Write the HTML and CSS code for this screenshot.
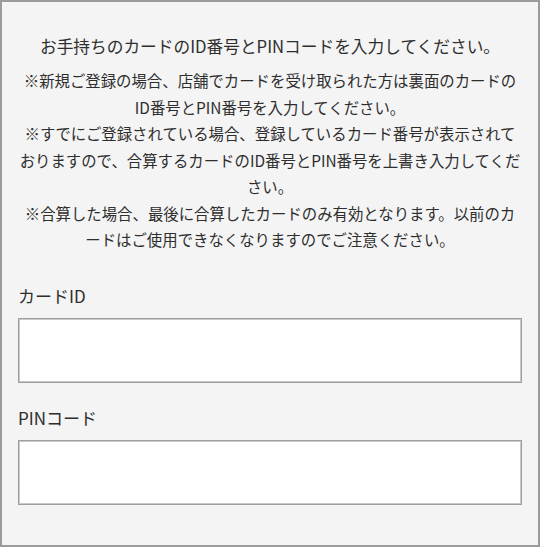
FILE: index.html
```html
<!DOCTYPE html>
<html lang="ja">
<head>
<meta charset="utf-8">
<title>カード登録</title>
<link rel="stylesheet" href="styles.css">
</head>
<body>
<div class="panel">
  <p class="lead">お手持ちのカードのID番号とPINコードを入力してください。</p>
  <p class="notes">※新規ご登録の場合、店舗でカードを受け取られた方は裏面のカードの<br>ID番号とPIN番号を入力してください。<br>※すでにご登録されている場合、登録しているカード番号が表示されて<br>おりますので、合算するカードのID番号とPIN番号を上書き入力してくだ<br>さい。<br>※合算した場合、最後に合算したカードのみ有効となります。以前のカ<br>ードはご使用できなくなりますのでご注意ください。</p>
  <div class="field">
    <label class="label" for="card-id">カードID</label>
    <input class="input" id="card-id" type="text">
  </div>
  <div class="field">
    <label class="label" for="pin">PINコード</label>
    <input class="input" id="pin" type="text">
  </div>
</div>
</body>
</html>
```
FILE: styles.css
```css
html, body {
  margin: 0;
  padding: 0;
}
body {
  font-family: "Noto Sans CJK JP", "Noto Sans", sans-serif;
  color: #2e2e2e;
  background: #f4f4f4;
}
.panel {
  box-sizing: border-box;
  width: 540px;
  height: 547px;
  border: 2px solid #9b9b9b;
  background: #f4f4f4;
  padding: 31px 16px 0;
}
.lead {
  margin: 0;
  font-size: 16.7px;
  line-height: 26px;
  text-align: center;
}
.notes {
  margin: 8px 0 0;
  font-size: 15.4px;
  line-height: 26.5px;
  text-align: center;
  white-space: nowrap;
}
.field {
  display: flex;
  flex-direction: column;
  margin-top: 23px;
}
.field:first-of-type {
  margin-top: 31.5px;
}
.label {
  font-size: 17px;
  line-height: 24px;
  margin-bottom: 10px;
}
.input {
  box-sizing: border-box;
  width: 100%;
  height: 65px;
  margin: 0;
  border: 1px solid #9e9e9e;
  box-shadow: inset 0 0 0 1px #c9c9c9;
  background: #fff;
  border-radius: 0;
  padding: 0 10px;
  font: inherit;
  outline: none;
}
```
